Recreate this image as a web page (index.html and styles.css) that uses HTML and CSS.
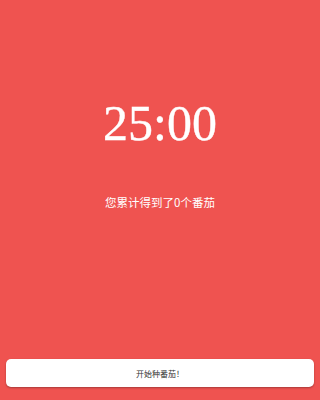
FILE: index.html
```html
<!DOCTYPE html>
<html lang="zh">
<head>
<meta charset="utf-8">
<title>番茄</title>
<link rel="stylesheet" href="styles.css">
</head>
<body>
<main class="screen">
  <div class="timer">25:00</div>
  <p class="count">您累计得到了0个番茄</p>
  <button class="start">开始种番茄！</button>
</main>
</body>
</html>
```
FILE: styles.css
```css
html, body {
  margin: 0;
  padding: 0;
  height: 100%;
}
body {
  background: #ef5350;
}
.screen {
  display: flex;
  flex-direction: column;
  align-items: center;
  height: 400px;
  box-sizing: border-box;
  padding: 98px 6px 13px;
}
.timer {
  font-family: "Liberation Serif", "DejaVu Serif", serif;
  font-size: 50px;
  line-height: 1;
  color: #fff;
  -webkit-text-stroke: 0.4px #fff;
}
.count {
  margin: 49px 0 0;
  font-family: "Noto Sans CJK SC", "Noto Sans", sans-serif;
  font-size: 11.5px;
  line-height: 1;
  color: #fff;
}
.start {
  margin-top: auto;
  width: 100%;
  height: 28px;
  border: none;
  border-radius: 5px;
  background: #fff;
  box-shadow: 0 1px 2px rgba(0, 0, 0, 0.3);
  font-family: "Noto Sans CJK JP", "Noto Sans CJK SC", sans-serif;
  font-size: 8px;
  color: #333;
  padding: 0;
}
```
